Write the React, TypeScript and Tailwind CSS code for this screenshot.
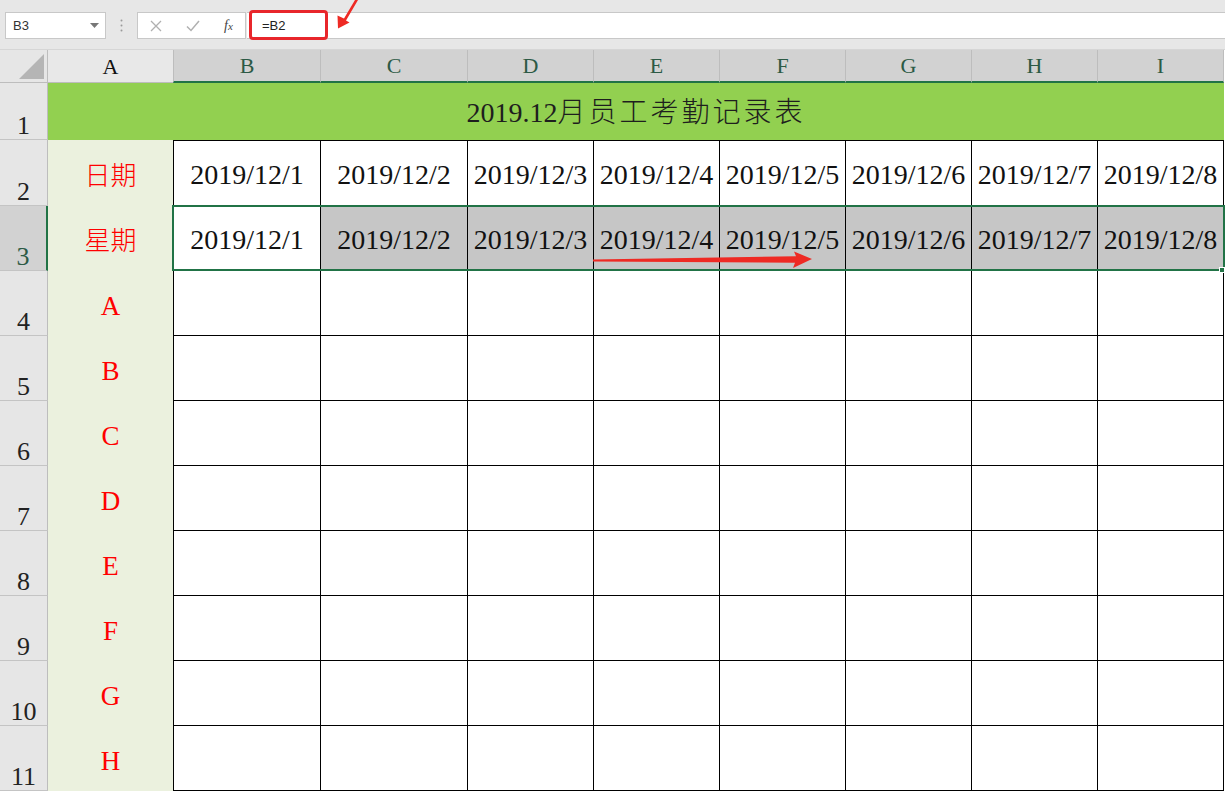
import React from "react";

const serif = "font-['Liberation_Serif','Noto_Sans_CJK_SC',serif]";
const sans = "font-['Liberation_Sans','Noto_Sans_CJK_SC',sans-serif]";

const dataCols = [
  { key: "B", w: "w-[148px]" },
  { key: "C", w: "w-[147px]" },
  { key: "D", w: "w-[126px]" },
  { key: "E", w: "w-[126px]" },
  { key: "F", w: "w-[126px]" },
  { key: "G", w: "w-[126px]" },
  { key: "H", w: "w-[126px]" },
  { key: "I", w: "w-[126px]" },
];

const dates = dataCols.map((_, i) => `2019/12/${i + 1}`);
const people = ["A", "B", "C", "D", "E", "F", "G", "H"];

function RowHead({ n, active }: { n: number; active?: boolean }) {
  return (
    <div
      className={`w-[48px] shrink-0 flex items-end justify-center border-b border-[#c4c4c4] text-[26px] leading-none ${serif} ${
        active
          ? "bg-[#d2d2d2] text-[#2c5a45] border-r-2 border-r-[#217346]"
          : "bg-[#e6e6e6] text-[#222] border-r border-r-[#bdbdbd]"
      }`}
    >
      {n}
    </div>
  );
}

function FormulaBar() {
  return (
    <div className="relative h-[50px] bg-[#e7e7e7] flex items-start pt-[12px] border-b border-[#d6d6d6]">
      <div className="ml-[5px] w-[101px] h-[27px] bg-white border border-[#c8c8c8] flex items-center justify-between pl-[7px] pr-[6px]">
        <span className={`text-[13px] text-[#333] ${sans}`}>B3</span>
        <svg width="9" height="5" viewBox="0 0 9 5">
          <path d="M0 0h9L4.5 5z" fill="#777" />
        </svg>
      </div>
      <div className="w-[31px] h-[27px] flex items-center justify-center">
        <svg width="3" height="13" viewBox="0 0 3 13">
          <circle cx="1.5" cy="1.5" r="1" fill="#9a9a9a" />
          <circle cx="1.5" cy="6.5" r="1" fill="#9a9a9a" />
          <circle cx="1.5" cy="11.5" r="1" fill="#9a9a9a" />
        </svg>
      </div>
      <div className="w-[109px] h-[27px] bg-white border border-[#c8c8c8] flex items-center">
        <div className="w-[36px] flex justify-center">
          <svg width="12" height="12" viewBox="0 0 12 12">
            <path d="M1 1l10 10M11 1L1 11" stroke="#b0b0b0" strokeWidth="1.3" />
          </svg>
        </div>
        <div className="w-[38px] flex justify-center">
          <svg width="14" height="12" viewBox="0 0 14 12">
            <path d="M1 6.5l4 4L13 1" stroke="#b0b0b0" strokeWidth="1.5" fill="none" />
          </svg>
        </div>
        <div className="flex-1 flex justify-center">
          <span className={`italic text-[14px] text-[#444] ${serif}`}>
            f<span className="text-[11px]">x</span>
          </span>
        </div>
      </div>
      <div className="ml-[1px] flex-1 h-[27px] bg-white border-y border-[#c8c8c8] flex items-center pl-[15px]">
        <span className={`text-[13px] text-[#222] ${sans}`}>=B2</span>
      </div>

      {/* annotation */}
      <div className="absolute left-[249px] top-[10px] w-[79px] h-[30px] border-[3px] border-[#e8262b] rounded-[4px]" />
      <svg className="absolute left-[330px] top-0" width="32" height="32" viewBox="330 0 32 32">
        <polygon points="358,0 355,0 344,18.5 337.5,15.5 338,28.5 349.5,22.5 346,20.5" fill="#ee2a24" />
      </svg>
    </div>
  );
}

function ColumnHeader() {
  return (
    <div className={`flex h-[33px] ${serif}`}>
      <div className="w-[48px] shrink-0 bg-[#e6e6e6] border-r border-b border-[#bdbdbd] relative">
        <svg className="absolute left-[19px] top-[4px]" width="25" height="25" viewBox="0 0 25 25">
          <polygon points="25,0 25,25 0,25" fill="#b5b5b5" />
        </svg>
      </div>
      <div className="w-[125px] shrink-0 bg-[#e8e8e8] border-b border-[#bdbdbd] flex items-center justify-center text-[22px] text-[#111]">
        A
      </div>
      {dataCols.map((c) => (
        <div
          key={c.key}
          className={`${c.w} shrink-0 bg-[#d2d2d2] border-r border-r-[#bdbdbd] border-b-2 border-b-[#217346] flex items-center justify-center text-[22px] text-[#2c5a45] ${c.key === "B" ? "border-l border-l-[#bdbdbd]" : ""}`}
        >
          {c.key}
        </div>
      ))}
    </div>
  );
}

export default function App() {
  return (
    <div className="relative w-[1225px] h-[792px] overflow-hidden bg-white">
      <FormulaBar />
      <ColumnHeader />

      {/* row 1 – title */}
      <div className="flex h-[57px]">
        <RowHead n={1} />
        <div className={`w-[1176px] shrink-0 bg-[#92d050] flex items-center justify-center text-[28px] text-[#1e1e1e] pt-[3px] ${serif}`}>
          2019.12<span className="tracking-[3px] font-light">月员工考勤记录表</span>
        </div>
      </div>

      {/* row 2 – dates */}
      <div className="flex h-[66px]">
        <RowHead n={2} />
        <div className={`w-[125px] shrink-0 bg-[#ebf1de] flex items-center justify-center pt-[6px] font-light text-[26px] text-[#ff0000] ${serif}`}>
          日期
        </div>
        {dataCols.map((c, i) => (
          <div
            key={c.key}
            className={`${c.w} shrink-0 border-t border-r border-b border-black ${i === 0 ? "border-l" : ""} flex items-center justify-center pt-[4px] text-[28px] text-[#111] ${serif}`}
          >
            {dates[i]}
          </div>
        ))}
      </div>

      {/* row 3 – weekday (selected) */}
      <div className="flex h-[65px]">
        <RowHead n={3} active />
        <div className={`w-[125px] shrink-0 bg-[#ebf1de] flex items-center justify-center pt-[6px] font-light text-[26px] text-[#ff0000] ${serif}`}>
          星期
        </div>
        {dataCols.map((c, i) => (
          <div
            key={c.key}
            className={`${c.w} shrink-0 border-r border-b border-black ${i === 0 ? "border-l bg-white" : "bg-[#c6c6c6]"} flex items-center justify-center pt-[4px] text-[28px] text-[#111] ${serif}`}
          >
            {dates[i]}
          </div>
        ))}
      </div>

      {/* rows 4-11 */}
      {people.map((p, r) => (
        <div key={p} className="flex h-[65px]">
          <RowHead n={r + 4} />
          <div className={`w-[125px] shrink-0 bg-[#ebf1de] flex items-center justify-center pt-[6px] text-[27px] text-[#ff0000] ${serif}`}>
            {p}
          </div>
          {dataCols.map((c, i) => (
            <div key={c.key} className={`${c.w} shrink-0 border-r border-b border-black ${i === 0 ? "border-l" : ""}`} />
          ))}
        </div>
      ))}

      {/* selection outline B3:I3 */}
      <div className="absolute left-[172px] top-[205px] w-[1053px] h-[66px] border-2 border-[#217346]" />
      <div className="absolute left-[1219px] top-[267px] w-[6px] h-[6px] bg-[#217346] border border-white" />

      {/* red fill arrow */}
      <svg className="absolute left-0 top-0 pointer-events-none" width="1225" height="792" viewBox="0 0 1225 792">
        <polygon points="593,259.6 796,256.2 794,251.5 812,259 793,268 795,262.8 593,261.6" fill="#ee2a24" />
      </svg>
    </div>
  );
}
